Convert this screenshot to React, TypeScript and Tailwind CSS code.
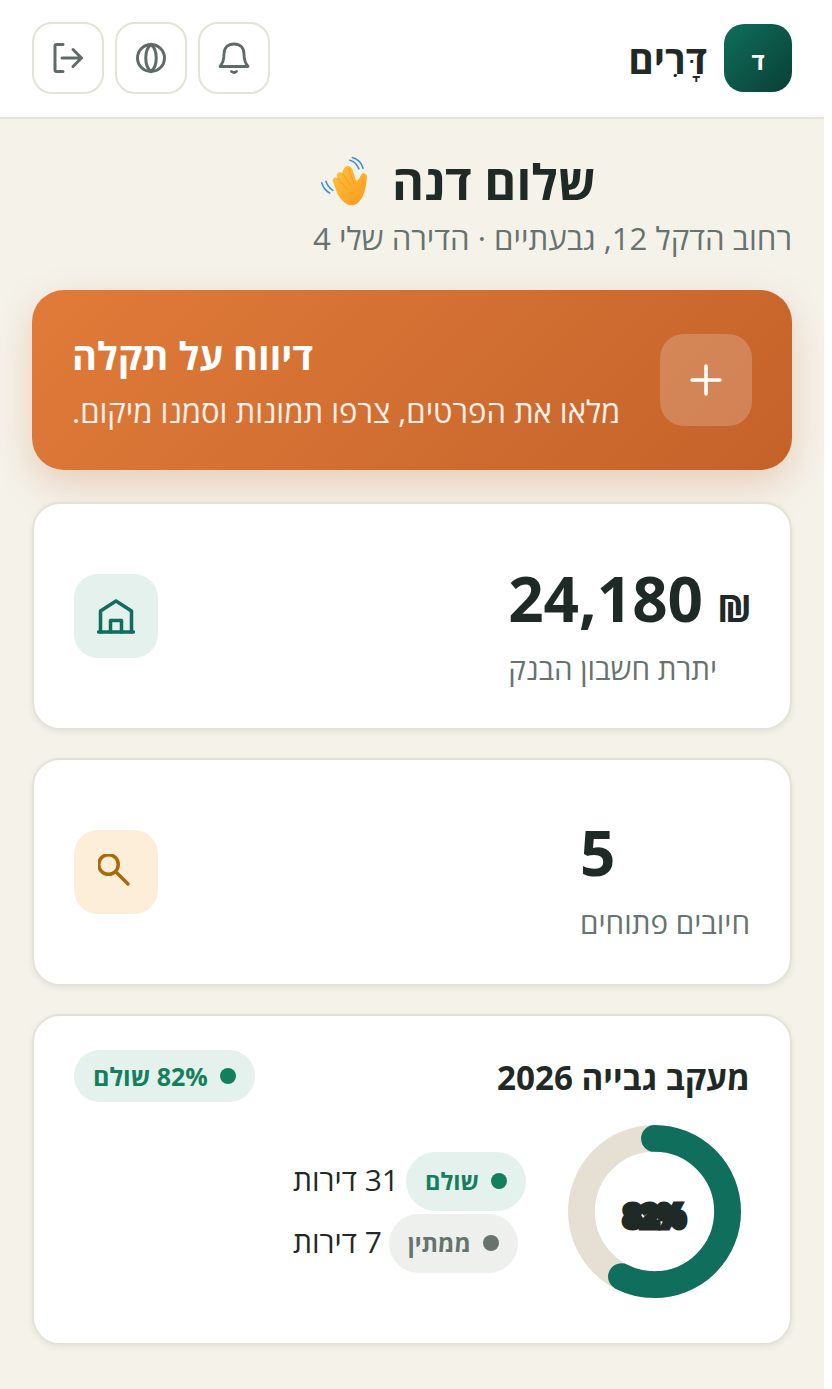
import React from 'react';

function LogoutIcon() {
  return (
    <svg width="34" height="34" viewBox="0 0 34 34" fill="none" stroke="#5f6b66" strokeWidth="3" strokeLinecap="round" strokeLinejoin="round">
      <path d="M12 3.500H5.500a1.500 1.500 0 0 0-1.500 1.500v24a1.500 1.500 0 0 0 1.500 1.500h6.500" />
      <path d="M11 17h19.500M22 8.500l8.500 8.500-8.500 8.500" />
    </svg>
  );
}

function GlobeIcon() {
  return (
    <svg width="32" height="32" viewBox="0 0 32 32" fill="none" stroke="#5f6b66" strokeWidth="3">
      <circle cx="16" cy="16" r="13.500" />
      <path d="M16 2.500C9 8 9 24 16 29.500C23 24 23 8 16 2.500Z" />
    </svg>
  );
}

function BellIcon() {
  return (
    <svg width="32" height="34" viewBox="0 0 32 34" fill="none" stroke="#5f6b66" strokeWidth="2.800" strokeLinecap="round" strokeLinejoin="round">
      <path d="M2 25.500h28c-3-3.500-4-6-4-12.500C26 6.500 22 3 16 3S6 6.500 6 13C6 19.500 5 22 2 25.500Z" />
      <path d="M13.500 30.500c1.300 1 3.700 1 5 0" />
    </svg>
  );
}

function WaveEmoji() {
  return (
    <svg width="52" height="52" viewBox="30 20 150 150" fill="none" strokeLinecap="round">
      <defs>
        <linearGradient id="hand" x1="0.1" y1="0" x2="0.9" y2="1">
          <stop offset="0" stopColor="#fdc23c" />
          <stop offset="1" stopColor="#fb9a1e" />
        </linearGradient>
      </defs>
      <path d="M38 100c3 12 11 23 23 30M50 96c3 10 9 19 20 26" stroke="#3c8fdc" strokeWidth="4.500" />
      <path d="M119 35c12 3 21 11 26 25M126 27c15 4 26 14 31 31" stroke="#3c8fdc" strokeWidth="4.500" />
      <path
        fill="url(#hand)"
        d="M70 96c-3-8 7-15 14-9l-2-6c-3-9 9-15 15-8l1 1c-1-10 6-23 17-22 7 1 11 8 14 17l6 21c3 6 8 3 11-2 4-7 6-15 13-15 8 0 10 7 9 14-2 18-4 34-11 50-7 17-21 30-36 28-14-2-26-15-37-31Z"
      />
      <path d="M85 88l26 30M98 73l22 34M116 58l14 42" stroke="#f09a20" strokeWidth="2.500" />
    </svg>
  );
}

function HeaderButton({ children }: { children: React.ReactNode }) {
  return (
    <button className="w-[72px] h-[72px] rounded-[20px] border-2 border-[#e5e2d6] bg-white flex items-center justify-center">
      {children}
    </button>
  );
}

function StatCard({ icon, iconBg, pad, children }: { icon: React.ReactNode; iconBg: string; pad: string; children: React.ReactNode }) {
  return (
    <div className="h-[228px] rounded-[28px] border-2 border-[#e5e2d6] bg-white shadow-[0_2px_6px_rgba(30,40,35,0.08)] px-[40px] flex items-center justify-between">
      <div className={`flex flex-col items-end ${pad}`}>{children}</div>
      <div className={`w-[84px] h-[84px] rounded-[24px] flex items-center justify-center ${iconBg}`}>{icon}</div>
    </div>
  );
}

export default function App() {
  return (
    <div dir="rtl" className="w-[824px] min-h-[1389px] bg-[#f5f2ea] text-[#1f2a27] font-['Open_Sans','Noto_Sans',sans-serif]">
      <header className="h-[119px] bg-white border-b-2 border-[#e5e2d6] px-[32px] pb-[1px] flex items-center justify-between">
        <div className="flex items-center gap-[17px]">
          <div className="w-[68px] h-[68px] rounded-[20px] bg-[linear-gradient(135deg,#0f6e5c,#0a3f35)] flex items-center justify-center pt-[6px] text-white text-[24px] font-bold">ד</div>
          <span className="text-[39px] font-bold leading-none">דָּרִים</span>
        </div>
        <div className="flex items-center gap-[11px]">
          <HeaderButton><BellIcon /></HeaderButton>
          <HeaderButton><GlobeIcon /></HeaderButton>
          <HeaderButton><LogoutIcon /></HeaderButton>
        </div>
      </header>

      <main className="px-[32px] pt-[32px]">
        <div className="w-fit flex flex-col items-end">
          <h1 className="text-[48.8px] font-bold leading-[60px] flex items-center gap-[21px] ml-[6px]">
            שלום דנה
            <WaveEmoji />
          </h1>
          <p className="text-[31.2px] leading-[38px] text-[#66736f] mt-[8px]">רחוב הדקל 12, גבעתיים · הדירה שלי 4</p>
        </div>

        <div className="mt-[33px] h-[180px] rounded-[32px] bg-[linear-gradient(135deg,#e07b39,#c4622a)] shadow-[0_14px_36px_rgba(196,98,42,0.25)] px-[40px] flex items-center gap-[40px]">
          <div className="w-[92px] h-[92px] rounded-[24px] bg-white/20 flex items-center justify-center">
            <svg width="32" height="32" viewBox="0 0 32 32" fill="none" stroke="#fff" strokeWidth="3.500" strokeLinecap="round">
              <path d="M16 2v28M2 16h28" />
            </svg>
          </div>
          <div className="flex flex-col items-end text-white">
            <div className="text-[38px] font-bold leading-[48px]">דיווח על תקלה</div>
            <div className="text-[31px] leading-[38px] text-white/90 mt-[13px] whitespace-nowrap">מלאו את הפרטים, צרפו תמונות וסמנו מיקום.</div>
          </div>
        </div>

        <div className="mt-[32px] flex flex-col gap-[28px]">
          <StatCard
            pad="pt-[12px]"
            iconBg="bg-[#e5f1ed]"
            icon={
              <svg width="38" height="36" viewBox="0 0 38 36" fill="none" stroke="#0f6e5c" strokeWidth="3.500" strokeLinecap="round" strokeLinejoin="round">
                <path d="M3.500 34V13L19 3l15.500 10v21" />
                <path d="M1.500 34h35" />
                <path d="M13.500 34V22.500h11V34" />
              </svg>
            }
          >
            <div className="text-[62px] font-bold h-[82px] leading-[82px] flex items-baseline gap-[14px]">
              <span className="text-[38px] font-bold leading-none -mr-[2px]">₪</span>
              <span dir="ltr">24,180</span>
            </div>
            <div className="text-[29.6px] leading-[38px] text-[#66736f] mt-[11px]">יתרת חשבון הבנק</div>
          </StatCard>

          <StatCard
            pad="pt-[8px]"
            iconBg="bg-[#fdeeda]"
            icon={
              <svg width="36" height="36" viewBox="0 0 36 36" fill="none" stroke="#a86a0a" strokeWidth="3.500" strokeLinecap="round">
                <circle cx="10.500" cy="10.500" r="9.750" />
                <path d="M18 18l12 12" />
              </svg>
            }
          >
            <div className="text-[62px] font-bold leading-[82px]">5</div>
            <div className="text-[29.6px] leading-[38px] text-[#66736f] mt-[11px]">חיובים פתוחים</div>
          </StatCard>

          <div className="h-[331px] rounded-[28px] border-2 border-[#e5e2d6] bg-white shadow-[0_2px_6px_rgba(30,40,35,0.08)] px-[40px] pt-[34px]">
            <div className="flex items-center justify-between">
              <div className="text-[33.2px] font-bold pt-[3px]">מעקב גבייה 2026</div>
              <div className="h-[52px] rounded-full bg-[#e5f1ed] px-[19px] flex items-center gap-[12px] text-[25px] font-bold text-[#12805c]">
                <span className="w-[16px] h-[16px] rounded-full bg-[#12805c]" />
                82% שולם
              </div>
            </div>

            <div className="flex items-center mt-[22px] mr-[9px] gap-[42px]">
              <svg width="173" height="173" viewBox="0 0 174 174" fill="none" className="shrink-0">
                <circle cx="87" cy="87" r="73.500" stroke="#e5dfd4" strokeWidth="27" />
                <circle cx="87" cy="87" r="73.500" stroke="#0f6e5c" strokeWidth="27" strokeLinecap="round" strokeDasharray="265 462" transform="rotate(-90 87 87)" />
                <text x="87" y="103" textAnchor="middle" direction="ltr" fontSize="30" fontWeight="700" fill="#1f2a27" stroke="#1f2a27" strokeWidth="7">82%</text>
              </svg>
              <div className="flex flex-col items-end gap-[3px] pt-[2px]">
                <div className="flex items-center gap-[7px]">
                  <span className="h-[59px] rounded-full bg-[#e5f1ed] px-[19px] flex items-center gap-[12px] text-[23.6px] font-bold text-[#12805c]">
                    <span className="w-[16px] h-[16px] rounded-full bg-[#12805c]" />
                    שולם
                  </span>
                  <span className="text-[30px] pb-[4px]">31 דירות</span>
                </div>
                <div className="flex items-center gap-[7px]">
                  <span className="h-[59px] rounded-full bg-[#eef0ee] px-[19px] flex items-center gap-[12px] text-[23.6px] font-bold text-[#66736f]">
                    <span className="w-[16px] h-[16px] rounded-full bg-[#66736f]" />
                    ממתין
                  </span>
                  <span className="text-[30px] pb-[4px]">7 דירות</span>
                </div>
              </div>
            </div>
          </div>
        </div>
      </main>
    </div>
  );
}
